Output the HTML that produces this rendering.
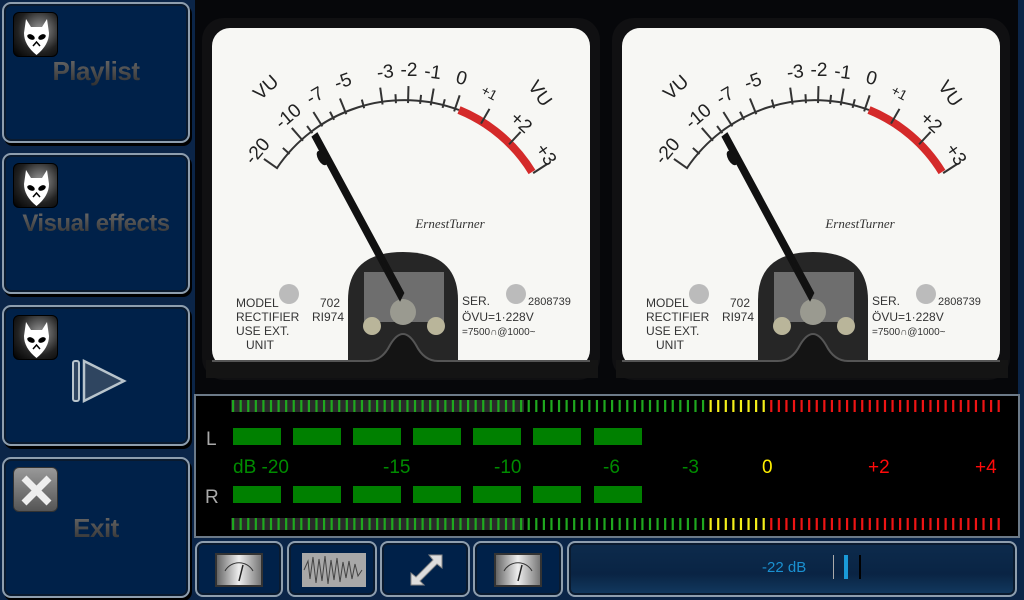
<!DOCTYPE html>
<html><head><meta charset="utf-8">
<style>
*{margin:0;padding:0;box-sizing:border-box}
body{width:1024px;height:600px;overflow:hidden;background:#0b2548;font-family:"Liberation Sans","DejaVu Sans",sans-serif;position:relative}
.lb{position:absolute;left:2px;width:188px;height:141px;border:2px solid #8e9eae;border-radius:9px;background:#002149;box-shadow:inset 0 0 0 2px #0a1a2e,2px 3px 0 #000}
.lb .t{position:absolute;left:0;right:0;text-align:center;font-size:26px;font-weight:bold;background:linear-gradient(#6c6c6c,#2e2e2e);-webkit-background-clip:text;background-clip:text;color:transparent;font-family:"Liberation Sans",sans-serif;letter-spacing:-0.5px}
.ic{position:absolute;left:9px;top:8px;width:45px;height:45px;border-radius:6px;background:radial-gradient(circle at 60% 40%,#999,#222 60%,#000);border:1px solid #000}
.bb{position:absolute;top:541px;height:56px;border:2px solid #8e9eae;border-radius:8px;background:#002149;box-shadow:inset 0 0 0 2px #0a1a2e}
</style></head><body>

<div class="lb" style="top:2px"><div class="ic"><svg width="45" height="45" viewBox="0 0 45 45"><path d="M12 6 L17 14 L28 14 L33 6 L35 20 Q35 32 22.5 42 Q10 32 10 20 Z" fill="#fff"/><ellipse cx="17" cy="24" rx="4" ry="2.5" fill="#000" transform="rotate(25 17 24)"/><ellipse cx="28" cy="24" rx="4" ry="2.5" fill="#000" transform="rotate(-25 28 24)"/><path d="M19 33 L22.5 29 L26 33" stroke="#000" stroke-width="1.5" fill="none"/></svg></div><div class="t" style="top:52px">Playlist</div></div>
<div class="lb" style="top:153px"><div class="ic"><svg width="45" height="45" viewBox="0 0 45 45"><path d="M12 6 L17 14 L28 14 L33 6 L35 20 Q35 32 22.5 42 Q10 32 10 20 Z" fill="#fff"/><ellipse cx="17" cy="24" rx="4" ry="2.5" fill="#000" transform="rotate(25 17 24)"/><ellipse cx="28" cy="24" rx="4" ry="2.5" fill="#000" transform="rotate(-25 28 24)"/><path d="M19 33 L22.5 29 L26 33" stroke="#000" stroke-width="1.5" fill="none"/></svg></div><div class="t" style="top:55px;font-size:24px">Visual effects</div></div>
<div class="lb" style="top:305px"><div class="ic"><svg width="45" height="45" viewBox="0 0 45 45"><path d="M12 6 L17 14 L28 14 L33 6 L35 20 Q35 32 22.5 42 Q10 32 10 20 Z" fill="#fff"/><ellipse cx="17" cy="24" rx="4" ry="2.5" fill="#000" transform="rotate(25 17 24)"/><ellipse cx="28" cy="24" rx="4" ry="2.5" fill="#000" transform="rotate(-25 28 24)"/><path d="M19 33 L22.5 29 L26 33" stroke="#000" stroke-width="1.5" fill="none"/></svg></div>
<svg style="position:absolute;left:66px;top:50px" width="60" height="50"><rect x="3" y="4" width="6" height="40" rx="2" fill="#2f4560" stroke="#b8c4cc" stroke-width="2"/><path d="M14 4 L54 24 L14 44 Z" fill="#2f4560" stroke="#b8c4cc" stroke-width="2.5"/></svg></div>
<div class="lb" style="top:457px"><div class="ic" style="background:linear-gradient(#999,#555);border-color:#333"><svg width="45" height="45"><path d="M10 10 L35 35 M35 10 L10 35" stroke="#eee" stroke-width="7"/></svg></div><div class="t" style="top:54px">Exit</div></div>

<svg style="position:absolute;left:193px;top:0" width="831" height="540" viewBox="193 0 831 540">
<defs>
<g id="meter">
<rect x="202" y="18" width="398" height="362" rx="22" fill="#101012"/>
<rect x="212" y="28" width="378" height="340" rx="18" fill="#f7f7f4"/>
<path d="M348 360 L348 300 Q348 252 403 252 Q458 252 458 300 L458 360 Z" fill="#262626"/>
<rect x="364" y="272" width="80" height="50" fill="#6e6e6e"/>
<circle cx="403" cy="312" r="13" fill="#9a9a90"/>
<circle cx="372" cy="326" r="9" fill="#b9b59a"/><circle cx="436" cy="326" r="9" fill="#b9b59a"/>
<path d="M206 360 L368 360 Q382 360 390 344 Q403 322 416 344 Q424 360 438 360 L598 360 L598 378 L206 378 Z" fill="#141414"/>
<path d="M212 361 L368 361 Q382 361 390 345 Q403 323 416 345 Q424 361 438 361 L590 361" fill="none" stroke="#555" stroke-width="2"/>
<circle cx="289" cy="294" r="10" fill="#bbb"/><circle cx="516" cy="294" r="10" fill="#bbb"/>
<path d="M277 168 A154 154 0 0 1 459 110" fill="none" stroke="#333" stroke-width="2"/>
<path d="M459 110 A154 154 0 0 1 532 172" fill="none" stroke="#d42a2a" stroke-width="8"/>
<g stroke="#333" stroke-width="2" class="ticks"></g>
<g font-family="Liberation Sans,sans-serif" font-size="19" fill="#222" text-anchor="middle">
<text transform="translate(270,92) rotate(-42)">VU</text>
<text transform="translate(262,155) rotate(-50)">-20</text>
<text transform="translate(292,121) rotate(-40)">-10</text>
<text transform="translate(318,101) rotate(-30)">-7</text>
<text transform="translate(345,87) rotate(-20)">-5</text>
<text transform="translate(386,78) rotate(-7)">-3</text>
<text transform="translate(409,76)">-2</text>
<text transform="translate(432,78) rotate(8)">-1</text>
<text transform="translate(460,84) rotate(15)">0</text>
<text transform="translate(487,97) rotate(28)" font-size="14">+1</text>
<text transform="translate(517,127) rotate(42)">+2</text>
<text transform="translate(541,158) rotate(55)">+3</text>
<text transform="translate(535,97) rotate(55)">VU</text>
</g>
<text x="450" y="228" font-family="Liberation Serif,serif" font-style="italic" font-size="13" fill="#333" text-anchor="middle">ErnestTurner</text>
<g font-size="12" fill="#333" font-family="Liberation Sans,sans-serif">
<text x="236" y="307">MODEL</text><text x="236" y="321">RECTIFIER</text><text x="236" y="335">USE EXT.</text><text x="246" y="349">UNIT</text>
<text x="320" y="307">702</text><text x="312" y="321">RI974</text>
<text x="462" y="305">SER.</text><text x="462" y="321">ÖVU=1·228V</text><text x="462" y="335" font-size="10">=7500∩@1000~</text>
<text x="528" y="305" font-size="11">2808739</text>
</g>
<path d="M403 293 L400 299 L313 137 L317 134 Z" fill="#111" stroke="#111" stroke-width="2.5"/>
<ellipse cx="322" cy="158" rx="4" ry="8" transform="rotate(-30 322 158)" fill="#111"/>
</g>
</defs>
<rect x="193" y="0" width="831" height="540" fill="#0b2548"/>
<rect x="195" y="0" width="823" height="395" fill="#06070a"/>
<use href="#meter"/>
<use href="#meter" transform="translate(410,0)"/>
<rect x="195" y="395" width="824" height="142" fill="#000" stroke="#6c7a88" stroke-width="2"/>
<rect x="231" y="400" width="293" height="12" fill="#2a2a2a"/>
<rect x="231" y="518" width="293" height="12" fill="#2a2a2a"/>
<g id="bt"></g>
<g fill="#008000">
<rect x="233" y="428" width="48" height="17"/><rect x="293" y="428" width="48" height="17"/><rect x="353" y="428" width="48" height="17"/><rect x="413" y="428" width="48" height="17"/><rect x="473" y="428" width="48" height="17"/><rect x="533" y="428" width="48" height="17"/><rect x="594" y="428" width="48" height="17"/>
<rect x="233" y="486" width="48" height="17"/><rect x="293" y="486" width="48" height="17"/><rect x="353" y="486" width="48" height="17"/><rect x="413" y="486" width="48" height="17"/><rect x="473" y="486" width="48" height="17"/><rect x="533" y="486" width="48" height="17"/><rect x="594" y="486" width="48" height="17"/>
</g>
<g font-size="19" font-family="Liberation Sans,sans-serif">
<text x="206" y="445" fill="#aaa">L</text><text x="205" y="503" fill="#aaa">R</text>
<text x="233" y="473" fill="#008c00">dB -20</text>
<text x="383" y="473" fill="#008c00">-15</text>
<text x="494" y="473" fill="#008c00">-10</text>
<text x="603" y="473" fill="#008c00">-6</text>
<text x="682" y="473" fill="#008c00">-3</text>
<text x="762" y="473" fill="#ffef00">0</text>
<text x="868" y="473" fill="#ff0a0a">+2</text>
<text x="975" y="473" fill="#ff0a0a">+4</text>
</g>
</svg>

<div class="bb" style="left:195px;width:88px"><svg style="position:absolute;left:18px;top:10px" width="48" height="34"><rect width="48" height="34" fill="#333"/><rect x="2" y="2" width="44" height="30" fill="url(#g1)"/><defs><linearGradient id="g1" x1="0" x2="1"><stop offset="0" stop-color="#666"/><stop offset=".5" stop-color="#eee"/><stop offset="1" stop-color="#777"/></linearGradient></defs><path d="M10 18 A16 16 0 0 1 38 18" stroke="#333" fill="none"/><path d="M24 28 L28 12" stroke="#222" stroke-width="1.5"/></svg></div>
<div class="bb" style="left:287px;width:90px"><svg style="position:absolute;left:13px;top:10px" width="64" height="34"><rect width="64" height="34" fill="#a8a8a8"/><path d="M2 17 L6 8 L8 26 L11 4 L14 30 L17 6 L20 28 L23 3 L26 31 L29 7 L32 27 L35 5 L38 29 L41 9 L44 25 L47 8 L50 26 L53 11 L56 23 L60 17" stroke="#444" fill="none"/></svg></div>
<div class="bb" style="left:380px;width:90px"><svg style="position:absolute;left:25px;top:8px" width="40" height="38"><path d="M4 34 L4 22 L9 26 L26 9 L22 4 L35 4 L35 17 L30 13 L13 30 L17 34 Z" fill="#ddd" stroke="#888"/></svg></div>
<div class="bb" style="left:473px;width:90px"><svg style="position:absolute;left:19px;top:10px" width="48" height="34"><rect width="48" height="34" fill="#333"/><rect x="2" y="2" width="44" height="30" fill="url(#g1)"/><path d="M10 18 A16 16 0 0 1 38 18" stroke="#333" fill="none"/><path d="M24 28 L28 12" stroke="#222" stroke-width="1.5"/></svg></div>
<div class="bb" style="left:567px;width:450px;background:linear-gradient(#0c2b4c,#0a2444 60%,#123a60)"><div style="position:absolute;left:193px;top:16px;font-size:15px;color:#1a90d0">-22 dB</div>
<div style="position:absolute;left:264px;top:12px;width:1px;height:24px;background:#aaa"></div>
<div style="position:absolute;left:275px;top:12px;width:4px;height:24px;background:#1a9ad8"></div>
<div style="position:absolute;left:290px;top:12px;width:2px;height:24px;background:#000"></div></div>

<script>
var NS="http://www.w3.org/2000/svg";
var t=document.querySelector(".ticks");
var cx=404,cy=257,r=154;
var maj=[-55,-41,-32,-22,-8,1.5,10,19,30,43,57];
var mn=[-48,-36.5,-27,-15,-3,6,14.5];
mn.forEach(function(a){add(a,9)});
maj.forEach(function(a){add(a,17)});
function add(a,L){var s=Math.sin(a*Math.PI/180),c=Math.cos(a*Math.PI/180);var l=document.createElementNS(NS,"line");l.setAttribute("x1",cx+r*s);l.setAttribute("y1",cy-r*c);l.setAttribute("x2",cx+(r+L)*s);l.setAttribute("y2",cy-(r+L)*c);t.appendChild(l);}
var b=document.getElementById("bt");
for(var x=232;x<=1005;x+=7.58){var col=x<705?"#1fa81f":(x<770?"#f5ef1a":"#ee1414");[400,518].forEach(function(y){var rr=document.createElementNS(NS,"rect");rr.setAttribute("x",x);rr.setAttribute("y",y);rr.setAttribute("width",2.2);rr.setAttribute("height",12);rr.setAttribute("fill",col);b.appendChild(rr);});}
</script>
</body></html>
